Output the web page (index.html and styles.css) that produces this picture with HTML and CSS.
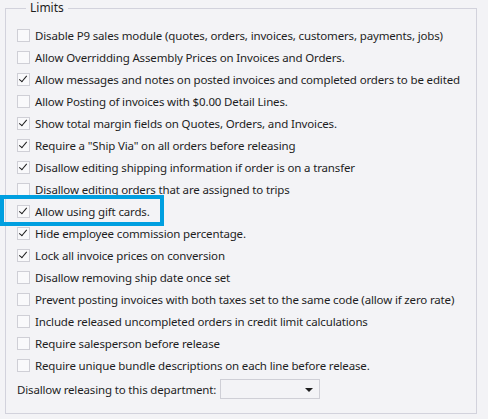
FILE: index.html
```html
<!DOCTYPE html>
<html lang="en">
<head>
    <meta charset="UTF-8">
    <title>Limits</title>
    <link rel="stylesheet" href="styles.css">
</head>
<body>
    <fieldset class="limits">
        <legend>Limits</legend>

        <label class="row"><span class="box"></span>Disable P9 sales module (quotes, orders, invoices, customers, payments, jobs)</label>
        <label class="row"><span class="box"></span>Allow Overridding Assembly Prices on Invoices and Orders.</label>
        <label class="row"><span class="box checked"></span>Allow messages and notes on posted invoices and completed orders to be edited</label>
        <label class="row"><span class="box"></span>Allow Posting of invoices with $0.00 Detail Lines.</label>
        <label class="row"><span class="box checked"></span>Show total margin fields on Quotes, Orders, and Invoices.</label>
        <label class="row"><span class="box checked"></span>Require a "Ship Via" on all orders before releasing</label>
        <label class="row"><span class="box checked"></span>Disallow editing shipping information if order is on a transfer</label>
        <label class="row"><span class="box"></span>Disallow editing orders that are assigned to trips</label>
        <label class="row highlight"><span class="box checked"></span>Allow using gift cards.</label>
        <label class="row"><span class="box checked"></span>Hide employee commission percentage.</label>
        <label class="row"><span class="box checked"></span>Lock all invoice prices on conversion</label>
        <label class="row"><span class="box"></span>Disallow removing ship date once set</label>
        <label class="row"><span class="box"></span>Prevent posting invoices with both taxes set to the same code (allow if zero rate)</label>
        <label class="row"><span class="box"></span>Include released uncompleted orders in credit limit calculations</label>
        <label class="row"><span class="box"></span>Require salesperson before release</label>
        <label class="row"><span class="box"></span>Require unique bundle descriptions on each line before release.</label>

        <div class="dept">
            <span>Disallow releasing to this department:</span>
            <div class="select"><span class="arrow"></span></div>
        </div>
    </fieldset>
</body>
</html>
```

FILE: styles.css
```css
body {
    margin: 0;
    padding: 1px 11px 0 5px;
    background: #f3f3f6;
    font-family: 'Noto Sans', 'Open Sans', sans-serif;
    font-size: 11.5px;
    letter-spacing: -0.15px;
    color: #1e1e1e;
}

.limits {
    margin: 0;
    padding: 9px 0 12px 11px;
    border: 1px solid #d2d2dc;
    display: flex;
    flex-direction: column;
}

.limits legend {
    margin-left: 9px;
    padding: 0 4px;
    line-height: 14px;
    font-size: 12px;
    letter-spacing: 0;
}

.row {
    display: flex;
    align-items: center;
    height: 22px;
    white-space: nowrap;
    position: relative;
}

.box {
    width: 11px;
    height: 11px;
    border: 1px solid #cfcfd6;
    background: #f9f9fb;
    margin-right: 5px;
    position: relative;
    flex: none;
}

.box.checked::after {
    content: '';
    position: absolute;
    left: 3px;
    top: 0px;
    width: 3px;
    height: 7px;
    border-right: 1.5px solid #1e1e1e;
    border-bottom: 1.5px solid #1e1e1e;
    transform: rotate(40deg);
}

.highlight::before {
    content: '';
    position: absolute;
    left: -17px;
    top: -5px;
    width: 156px;
    height: 23px;
    border: 4px solid #009fe0;
}

.dept {
    display: flex;
    align-items: center;
    gap: 4px;
    height: 24px;
    margin-top: 1px;
}

.select {
    width: 98px;
    height: 18px;
    border: 1px solid #cfcfd6;
    position: relative;
}

.arrow {
    position: absolute;
    right: 6px;
    top: 8px;
    border-left: 4px solid transparent;
    border-right: 4px solid transparent;
    border-top: 4px solid #1e1e1e;
}
```
